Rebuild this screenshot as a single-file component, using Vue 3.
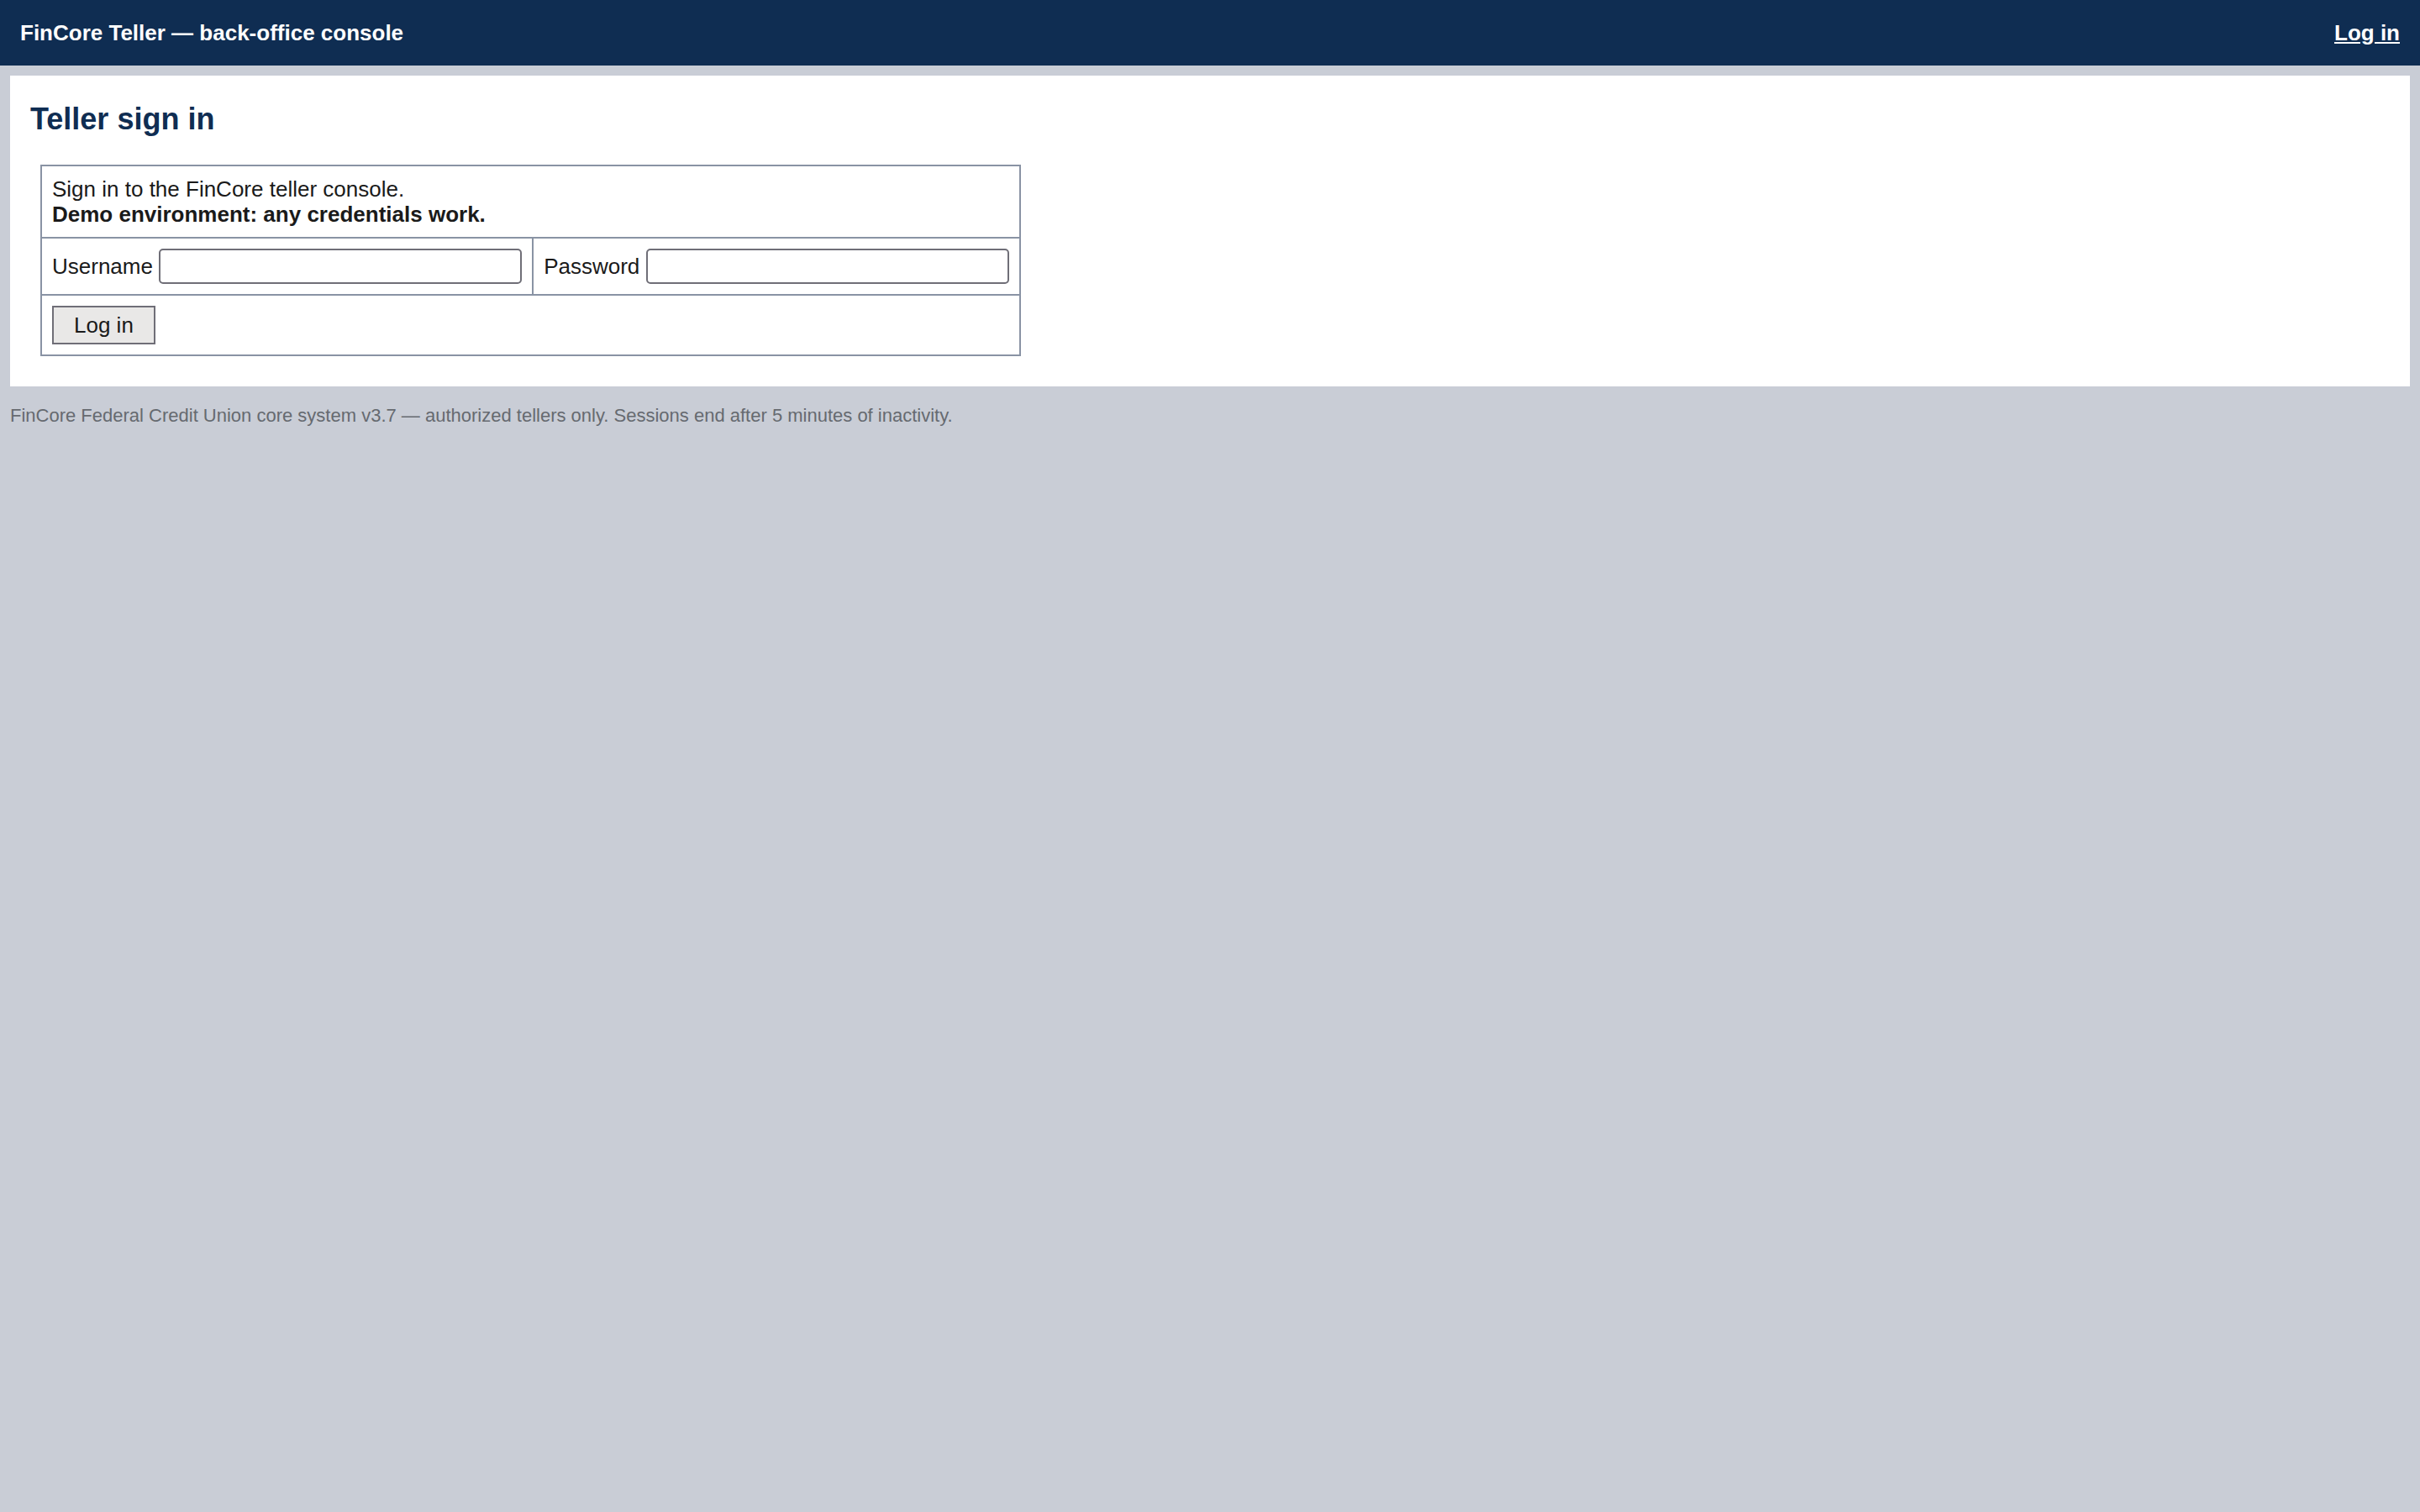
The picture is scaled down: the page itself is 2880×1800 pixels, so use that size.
<template>
  <div class="console">
    <header class="top-bar">
      <span class="brand">FinCore Teller — back-office console</span>
      <nav>
        <a class="top-link" href="#login">Log in</a>
      </nav>
    </header>

    <main class="panel">
      <h1 class="title">Teller sign in</h1>
      <form id="login" @submit.prevent="login">
        <table class="form-table">
          <tbody>
            <tr>
              <td colspan="2">
                Sign in to the FinCore teller console.<br>
                <b>Demo environment: any credentials work.</b>
              </td>
            </tr>
            <tr>
              <td>
                <label for="username">Username</label> <input id="username" v-model="username" type="text" autocomplete="username">
              </td>
              <td>
                <label for="password">Password</label> <input id="password" v-model="password" type="password" autocomplete="current-password">
              </td>
            </tr>
            <tr>
              <td colspan="2">
                <button class="login-btn" type="submit">Log in</button>
              </td>
            </tr>
          </tbody>
        </table>
      </form>
    </main>

    <footer class="footer">
      FinCore Federal Credit Union core system v3.7 — authorized tellers only. Sessions end after 5 minutes of inactivity.
    </footer>
  </div>
</template>

<script setup>
import { ref } from 'vue'

const username = ref('')
const password = ref('')

// demo environment, nothing is checked
function login() {
  password.value = ''
}
</script>

<style>
body {
  margin: 0;
  background: #c9cdd6;
}
</style>

<style scoped>
.console {
  font-family: "Liberation Sans", Arial, sans-serif;
  font-size: 26px;
  line-height: 30px;
  color: #1a1a1a;
}
.top-bar {
  display: flex;
  justify-content: space-between;
  align-items: center;
  padding: 24px;
  background: #0f2d52;
  color: #fff;
  font-weight: bold;
}
.top-link {
  color: #fff;
}
.panel {
  margin: 12px;
  padding: 24px;
  background: #fff;
}
.title {
  margin: 8px 0 34px;
  font-size: 36px;
  line-height: 40px;
  color: #0f2d52;
}
.form-table {
  margin: 12px;
  border-collapse: collapse;
}
.form-table td {
  padding: 12px;
  border: 2px solid #8993a4;
  white-space: nowrap;
}
.form-table input {
  box-sizing: border-box;
  width: 432px;
  height: 42px;
  margin: 0;
  padding: 4px;
  border: 2px solid #6f6e77;
  border-radius: 5px;
  background: #fff;
  font: inherit;
  color: inherit;
}
.login-btn {
  display: block;
  padding: 6px 24px;
  border: 2px solid #6f6e77;
  border-radius: 0;
  background: #e9e8e7;
  font: inherit;
  color: inherit;
  cursor: pointer;
}
.footer {
  margin: 22px 12px;
  font-size: 22px;
  line-height: 25px;
  color: #666a70;
}
</style>
